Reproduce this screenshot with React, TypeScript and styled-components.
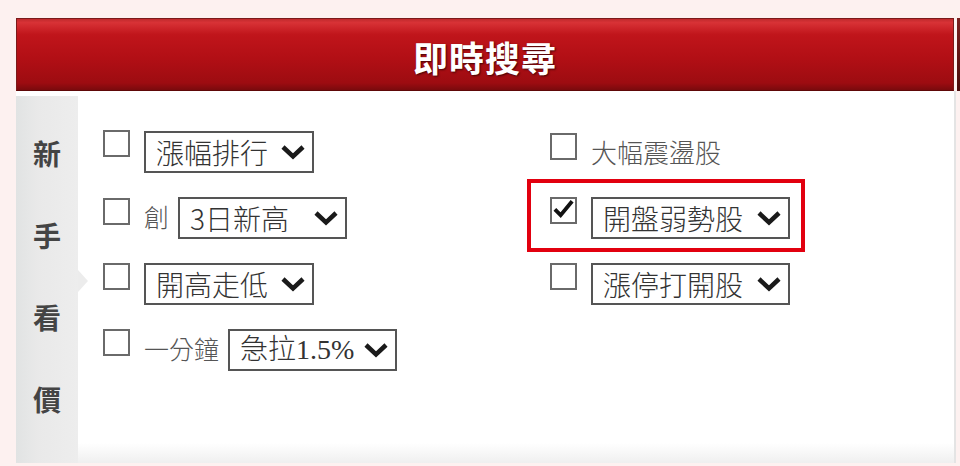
import React from "react";
import styled, { createGlobalStyle } from "styled-components";

const Global = createGlobalStyle`
  html, body { margin: 0; padding: 0; background: #fdf1f0; }
  body { font-family: "Noto Sans CJK TC", "Noto Sans", sans-serif; }
  * { box-sizing: border-box; }
`;

const Page = styled.div`
  display: flex;
  gap: 1px;
  width: 960px;
  height: 466px;
  padding: 18px 0 0 16px;
  background: #fdf1f0;
  overflow: hidden;
`;

const Main = styled.div`
  width: 941px;
  display: flex;
  flex-direction: column;
`;

const NextTab = styled.div`
  width: 3px;
  height: 73px;
  background: linear-gradient(to bottom, #7a2020, #4a0c0c);
`;

const Header = styled.header`
  width: 938px;
  height: 73px;
  display: flex;
  align-items: center;
  justify-content: center;
  padding-top: 4px;
  border: 1px solid #7b1a1a;
  border-bottom-color: #5e0808;
  background: linear-gradient(
    to bottom,
    #c02a2d 0%,
    #d83236 5%,
    #c0151b 22%,
    #b20f15 55%,
    #9d0c11 90%,
    #7a0a0d 100%
  );
  color: #fff;
  font-size: 35px;
  font-weight: 700;
  letter-spacing: 1px;
  text-shadow: 1px 1px 2px rgba(40, 0, 0, 0.8);
`;

const Body = styled.div`
  display: flex;
  height: 372px;
  background: linear-gradient(to bottom, #ffffff 0, #ffffff 352px, #efefef 372px);
  border-right: 2px solid #e4e4e4;
`;

const Sidebar = styled.aside`
  position: relative;
  width: 62px;
  height: 367px;
  margin-top: 5px;
  padding-top: 43px;
  display: flex;
  flex-direction: column;
  align-items: center;
  gap: 54px;
  background: linear-gradient(to right, #e1e3e3 0%, #e9e9e9 35%, #ededed 100%);
  color: #444;
  font-size: 28px;
  font-weight: 700;
  line-height: 1;

  &::after {
    content: "";
    position: absolute;
    right: -10px;
    top: 174px;
    border-left: 10px solid #ececec;
    border-top: 11px solid transparent;
    border-bottom: 11px solid transparent;
  }
`;

const SideChar = styled.span`
  display: block;
  height: 28px;
`;

const Panel = styled.div`
  flex: 1;
  padding: 40px 0 0 25px;
  display: grid;
  grid-template-columns: 447px auto;
  grid-auto-rows: 42px;
  row-gap: 24px;
  align-content: start;
`;

const Row = styled.div`
  position: relative;
  display: flex;
  align-items: center;
  height: 42px;
  width: max-content;
`;

const Box = styled.span<{ $offset?: number }>`
  align-self: flex-start;
  margin-top: ${(p) => p.$offset ?? 0}px;
  width: 27px;
  height: 27px;
  flex: none;
  border: 2px solid #6a6a6a;
  background: #fff;
  margin-right: 14px;
  display: flex;
  align-items: center;
  justify-content: center;
`;

const Label = styled.span`
  font-size: 25px;
  font-weight: 300;
  line-height: 1;
  color: #555;
  margin-right: 9px;
  margin-top: -4px;
`;

const PlainText = styled.span`
  font-size: 26px;
  font-weight: 300;
  line-height: 1;
  color: #555;
`;

const SelectBox = styled.div<{ $w: number; $serif?: boolean }>`
  width: ${(p) => p.$w}px;
  height: 42px;
  border: 2px solid #555;
  background: #fff;
  display: flex;
  align-items: center;
  justify-content: space-between;
  padding: 0 6px 0 10px;
  font-family: ${(p) =>
    p.$serif
      ? '"Liberation Serif", "Noto Sans CJK TC", serif'
      : '"Noto Sans CJK TC", sans-serif'};
  font-size: 28px;
  font-weight: 300;
  line-height: 1;
  color: #333;
  white-space: nowrap;
`;

const Highlight = styled.div`
  position: absolute;
  top: -18px;
  bottom: -13px;
  left: -23px;
  right: -15px;
  border: 4px solid #e2000f;
  pointer-events: none;
`;

const Chevron = () => (
  <svg width="26" height="16" viewBox="0 0 26 16" aria-hidden>
    <polyline
      points="3,3 13,12.5 23,3"
      fill="none"
      stroke="#1a1a1a"
      strokeWidth="4.5"
      strokeLinejoin="miter"
    />
  </svg>
);

const Check = () => (
  <svg width="24" height="22" viewBox="0 0 24 22" aria-hidden style={{ marginTop: -4 }}>
    <path d="M3 11.5 L9 17.5 L21 3" fill="none" stroke="#111" strokeWidth="4" />
  </svg>
);

const Checkbox = ({ checked, offset }: { checked?: boolean; offset?: number }) => (
  <Box $offset={offset}>{checked ? <Check /> : null}</Box>
);

const Select = ({ text, w, serif }: { text: string; w: number; serif?: boolean }) => (
  <SelectBox $w={w} $serif={serif}>
    <span>{text}</span>
    <Chevron />
  </SelectBox>
);

export default function App() {
  return (
    <>
      <Global />
      <Page>
        <Main>
          <Header>即時搜尋</Header>
          <Body>
            <Sidebar>
              <SideChar>新</SideChar>
              <SideChar>手</SideChar>
              <SideChar>看</SideChar>
              <SideChar>價</SideChar>
            </Sidebar>
            <Panel>
              <Row>
                <Checkbox offset={-1} />
                <Select text="漲幅排行" w={170} />
              </Row>
              <Row>
                <Checkbox offset={2} />
                <PlainText>大幅震盪股</PlainText>
              </Row>
              <Row>
                <Checkbox offset={1} />
                <Label>創</Label>
                <Select text="3日新高" w={169} />
              </Row>
              <Row>
                <Highlight />
                <Checkbox checked />
                <Select text="開盤弱勢股" w={199} />
              </Row>
              <Row>
                <Checkbox />
                <Select text="開高走低" w={170} />
              </Row>
              <Row>
                <Checkbox />
                <Select text="漲停打開股" w={199} />
              </Row>
              <Row>
                <Checkbox />
                <Label>一分鐘</Label>
                <Select text="急拉1.5%" w={169} serif />
              </Row>
            </Panel>
          </Body>
        </Main>
        <NextTab />
      </Page>
    </>
  );
}
